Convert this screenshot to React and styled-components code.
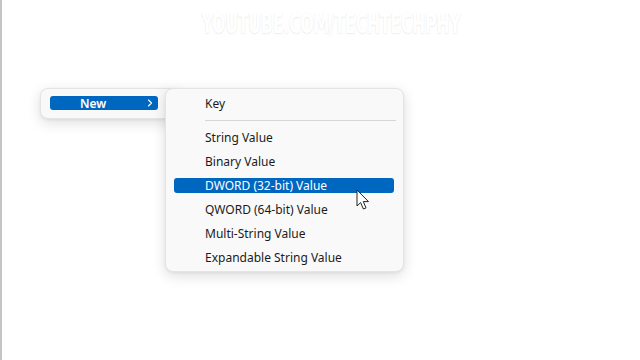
import React from "react";
import styled, { createGlobalStyle } from "styled-components";

const Global = createGlobalStyle`
  html, body { margin: 0; padding: 0; background: #ffffff; }
  body { width: 640px; height: 360px; overflow: hidden; font-family: "Noto Sans", "Open Sans", sans-serif; }
`;

const Screen = styled.div`
  position: relative;
  width: 640px;
  height: 360px;
  background: #ffffff;
  border-left: 2px solid #c4c4c4;
  box-sizing: border-box;
  overflow: hidden;
`;

const Watermark = styled.div`
  position: absolute;
  top: 9px;
  left: 20px;
  right: 0;
  text-align: center;
  font-family: "DejaVu Sans Condensed", "Liberation Sans Narrow", sans-serif;
  font-weight: 700;
  font-size: 26px;
  letter-spacing: -0.5px;
  color: #ffffff;
  text-shadow: 0 1px 2px rgba(0, 0, 0, 0.07), 0 0 1px rgba(0, 0, 0, 0.06);
  transform: scaleX(0.68);
`;

const Menu = styled.div`
  position: absolute;
  left: ${(p) => p.$x}px;
  top: ${(p) => p.$y}px;
  width: ${(p) => p.$w}px;
  height: ${(p) => p.$h}px;
  box-sizing: border-box;
  background: #f9f9f9;
  border: 1px solid #e4e4e4;
  border-radius: 8px;
  box-shadow: 0 4px 14px rgba(0, 0, 0, 0.13), 0 1px 3px rgba(0, 0, 0, 0.06);
  display: flex;
  flex-direction: column;
  padding: ${(p) => p.$pad};
`;

const Item = styled.div`
  height: 24px;
  display: flex;
  align-items: center;
  position: relative;
  font-size: 12px;
  color: #1b1b1b;
  padding-left: 39px;
  &::before {
    content: "";
    position: absolute;
    left: 8px;
    right: 9px;
    top: 5px;
    bottom: 4px;
    border-radius: 3px;
    background: ${(p) => (p.$active ? "#0067c0" : "transparent")};
  }
  span {
    position: relative;
    color: ${(p) => (p.$active ? "#ffffff" : "#1b1b1b")};
  }
`;

const Separator = styled.div`
  height: 10px;
  display: flex;
  align-items: center;
  padding: 0 7px 0 39px;
  &::after {
    content: "";
    flex: 1;
    height: 1px;
    background: #d6d6d6;
  }
`;

const ParentItem = styled.div`
  height: 14px;
  margin: 7px 0 0 9px;
  width: 108px;
  border-radius: 3px;
  background: #0067c0;
  display: flex;
  align-items: center;
  justify-content: space-between;
  padding: 0 5px 0 30px;
  box-sizing: border-box;
  color: #ffffff;
  font-size: 12px;
  font-weight: 600;
`;

const Chevron = styled.svg`
  width: 6px;
  height: 8px;
`;

const Cursor = styled.svg`
  position: absolute;
  left: 354px;
  top: 189px;
  width: 15px;
  height: 22px;
`;

const subItems = [
  { label: "String Value" },
  { label: "Binary Value" },
  { label: "DWORD (32-bit) Value", active: true },
  { label: "QWORD (64-bit) Value" },
  { label: "Multi-String Value" },
  { label: "Expandable String Value" },
];

export default function App() {
  return (
    <>
      <Global />
      <Screen>
        <Watermark>YOUTUBE.COM/TECHTECHPHY</Watermark>
        <Menu $x={38} $y={88} $w={140} $h={31} $pad="0">
          <ParentItem>
            <span>New</span>
            <Chevron viewBox="0 0 6 8">
              <path d="M1.5 1 L4.5 4 L1.5 7" fill="none" stroke="#ffffff" strokeWidth="1.1" strokeLinecap="round" strokeLinejoin="round" />
            </Chevron>
          </ParentItem>
        </Menu>
        <Menu $x={163} $y={88} $w={239} $h={184} $pad="2px 0 0 0">
          <Item>
            <span>Key</span>
          </Item>
          <Separator />
          {subItems.map((it) => (
            <Item key={it.label} $active={it.active}>
              <span>{it.label}</span>
            </Item>
          ))}
        </Menu>
        <Cursor viewBox="0 0 15 22">
          <path
            d="M1 1 L1 17 L4.6 13.6 L7.4 20 L10 18.9 L7.3 12.6 L12.5 12.6 Z"
            fill="#ffffff"
            stroke="#222222"
            strokeWidth="1"
            strokeLinejoin="round"
          />
        </Cursor>
      </Screen>
    </>
  );
}
